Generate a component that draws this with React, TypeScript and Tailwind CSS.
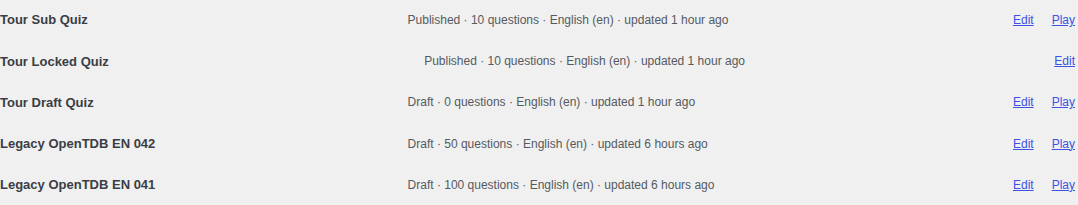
import React from "react";

type Quiz = { name: string; meta: string; play: boolean };

const quizzes: Quiz[] = [
  { name: "Tour Sub Quiz", meta: "Published · 10 questions · English (en) · updated 1 hour ago", play: true },
  { name: "Tour Locked Quiz", meta: "Published · 10 questions · English (en) · updated 1 hour ago", play: false },
  { name: "Tour Draft Quiz", meta: "Draft · 0 questions · English (en) · updated 1 hour ago", play: true },
  { name: "Legacy OpenTDB EN 042", meta: "Draft · 50 questions · English (en) · updated 6 hours ago", play: true },
  { name: "Legacy OpenTDB EN 041", meta: "Draft · 100 questions · English (en) · updated 6 hours ago", play: true },
];

export default function App() {
  return (
    <div
      className="w-[1078px] h-[205px] overflow-hidden bg-[#f0f0f0] pr-[3px]"
      style={{ fontFamily: '"Liberation Sans", Arial, sans-serif' }}
    >
      <ul className="-mt-[0.5px]">
        {quizzes.map((q) => (
          <li key={q.name} className="grid grid-cols-[2fr_3fr_auto] items-center gap-3 h-[41.2px]">
            <span className="text-[13px] font-bold text-[#3a3d45]">{q.name}</span>
            <span className="text-[12px] text-[#555a60]">{q.meta}</span>
            <span className="flex gap-[18px] text-[12px]">
              <a href="#" className="text-[#3c52e2] underline">Edit</a>
              {q.play && <a href="#" className="text-[#3c52e2] underline">Play</a>}
            </span>
          </li>
        ))}
      </ul>
    </div>
  );
}
